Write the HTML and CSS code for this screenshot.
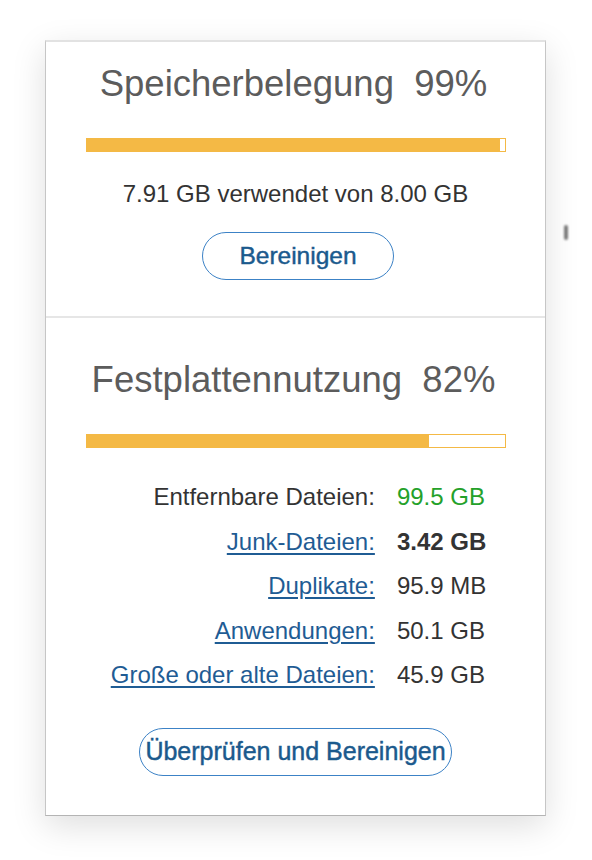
FILE: index.html
```html
<!DOCTYPE html>
<html lang="de">
<head>
<meta charset="utf-8">
<title>Speicher</title>
<link rel="stylesheet" href="styles.css">
</head>
<body>
<div class="panel">
  <span class="blob"></span>
  <section class="section memory">
    <h1 class="title">Speicherbelegung&nbsp; 99%</h1>
    <div class="bar"><div class="fill" style="width:99%"></div></div>
    <p class="usage">7.91 GB verwendet von 8.00 GB</p>
    <button class="btn btn-small">Bereinigen</button>
  </section>
  <section class="section disk">
    <h1 class="title">Festplattennutzung&nbsp; 82%</h1>
    <div class="bar"><div class="fill" style="width:82%"></div></div>
    <div class="stats">
      <span class="label">Entfernbare Dateien:</span><span class="value green">99.5 GB</span>
      <a class="label link" href="#">Junk-Dateien:</a><span class="value bold">3.42 GB</span>
      <a class="label link" href="#">Duplikate:</a><span class="value">95.9 MB</span>
      <a class="label link" href="#">Anwendungen:</a><span class="value">50.1 GB</span>
      <a class="label link" href="#">Große oder alte Dateien:</a><span class="value">45.9 GB</span>
    </div>
    <button class="btn btn-wide">Überprüfen und Bereinigen</button>
  </section>
</div>
</body>
</html>
```
FILE: styles.css
```css
html, body {
  margin: 0;
  padding: 0;
  background: #ffffff;
}
body {
  font-family: "Liberation Sans", Arial, Helvetica, sans-serif;
  width: 592px;
  height: 860px;
  overflow: hidden;
}
.panel {
  position: relative;
  box-sizing: border-box;
  width: 501px;
  height: 776px;
  margin: 40px 0 0 45px;
  background: #ffffff;
  border-top: 2px solid #e2e2e2;
  border-left: 1px solid #c6c6c6;
  border-right: 1px solid #c6c6c6;
  border-bottom: 1px solid #b4b4b4;
  box-shadow: 0 10px 32px rgba(0, 0, 0, 0.13);
  display: flex;
  flex-direction: column;
}
.panel::before {
  content: "";
  position: absolute;
  top: -2px;
  left: -1px;
  right: -1px;
  height: 299px;
  z-index: -1;
  box-shadow: -1px 0 0 rgba(0, 0, 0, 0.45), 1px 0 0 rgba(0, 0, 0, 0.45), 0 0 30px rgba(0, 0, 0, 0.32);
}
.blob {
  position: absolute;
  left: 518px;
  top: 183px;
  width: 4px;
  height: 15px;
  border-radius: 2px;
  background: #7a7a7a;
  filter: blur(1px);
}
.section {
  display: flex;
  flex-direction: column;
  align-items: center;
}
.memory {
  padding: 22px 0 36px;
  border-bottom: 2px solid #e6e6e6;
}
.disk {
  padding-top: 42px;
}
.title {
  margin: 0 4px 0 0;
  font-size: 36.5px;
  line-height: 40px;
  font-weight: normal;
  color: #5c5c5c;
  white-space: nowrap;
}
.bar {
  box-sizing: border-box;
  width: 420px;
  height: 14px;
  margin-top: 34px;
  border: 1px solid #f4b945;
  background: #ffffff;
}
.fill {
  height: 100%;
  background: #f4b945;
}
.usage {
  margin: 28px 0 0;
  font-size: 24px;
  line-height: 28px;
  color: #333333;
}
.btn {
  box-sizing: border-box;
  height: 48px;
  margin-top: 24px;
  padding: 0;
  border: 1px solid #3c82c6;
  border-radius: 24px;
  background: #ffffff;
  font-family: "Liberation Sans", Arial, Helvetica, sans-serif;
  font-size: 24.5px;
  font-weight: normal;
  -webkit-text-stroke: 0.45px #1b5a8d;
  color: #1b5a8d;
}
.btn-small {
  width: 192px;
  margin-left: 5px;
}
.btn-wide {
  width: 313px;
  margin-top: 30px;
  font-size: 25px;
}
.stats {
  margin: 27px 0 0 6px;
  display: grid;
  grid-template-columns: auto auto;
  column-gap: 22px;
  justify-content: center;
  font-size: 24px;
  line-height: 44.5px;
  color: #333333;
}
.label {
  text-align: right;
  color: #333333;
}
.link {
  color: #1f5c94;
  text-decoration: underline;
  text-underline-offset: 3px;
}
.value {
  text-align: left;
}
.green {
  color: #24a12a;
}
.bold {
  font-weight: bold;
}
```
